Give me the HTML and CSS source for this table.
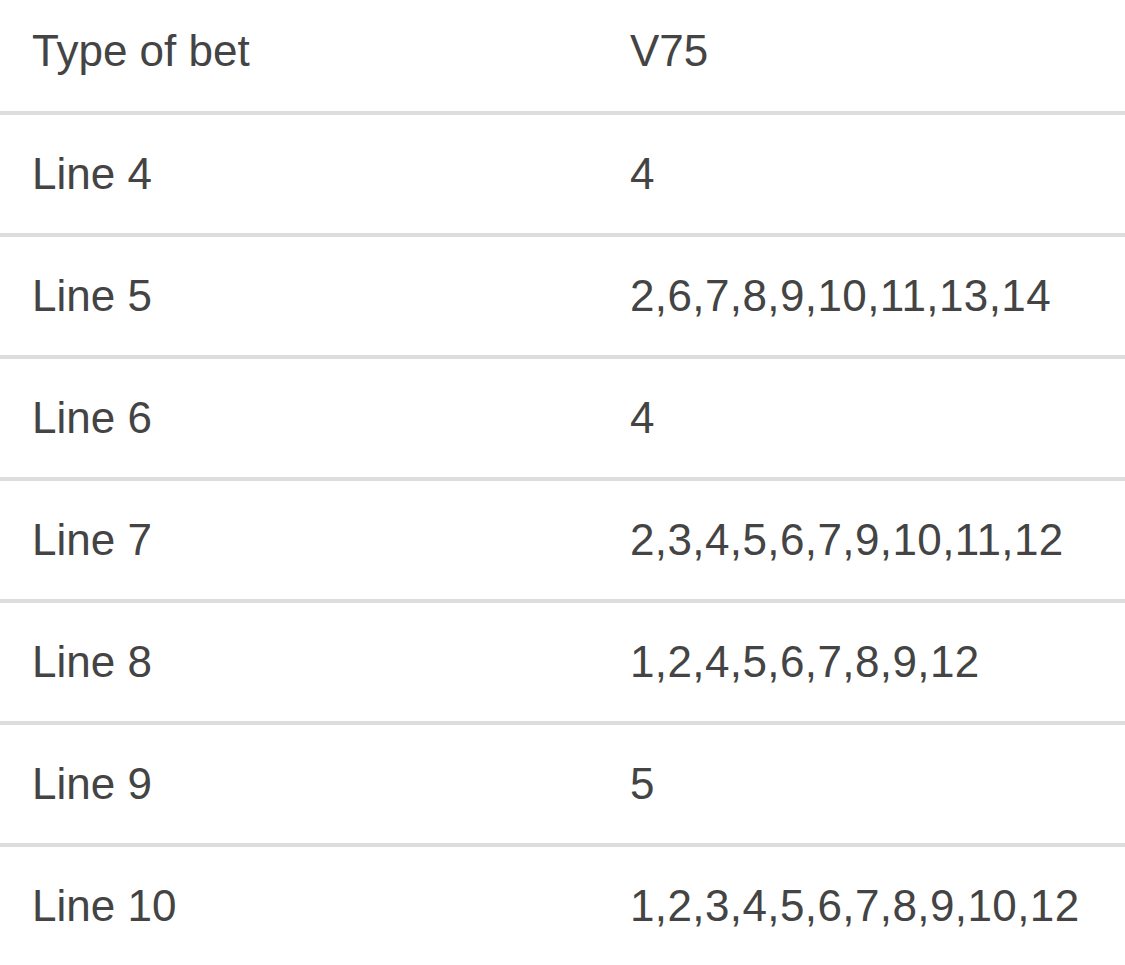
FILE: index.html
```html
<!DOCTYPE html>
<html>
<head>
<meta charset="utf-8">
<link rel="stylesheet" href="styles.css">
</head>
<body>
<div class="table">
  <div class="row head"><div class="cell">Type of bet</div><div class="cell">V75</div></div>
  <div class="row"><div class="cell">Line 4</div><div class="cell value">4</div></div>
  <div class="row"><div class="cell">Line 5</div><div class="cell value">2,6,7,8,9,10,11,13,14</div></div>
  <div class="row"><div class="cell">Line 6</div><div class="cell value">4</div></div>
  <div class="row"><div class="cell">Line 7</div><div class="cell value">2,3,4,5,6,7,9,10,11,12</div></div>
  <div class="row"><div class="cell">Line 8</div><div class="cell value">1,2,4,5,6,7,8,9,12</div></div>
  <div class="row"><div class="cell">Line 9</div><div class="cell value">5</div></div>
  <div class="row"><div class="cell">Line 10</div><div class="cell value">1,2,3,4,5,6,7,8,9,10,12</div></div>
</div>
</body>
</html>
```
FILE: styles.css
```css
html, body {
  margin: 0;
  padding: 0;
  background: #fff;
}
body {
  font-family: "Liberation Sans", Arial, Helvetica, sans-serif;
  font-size: 44px;
  color: #444;
  overflow: hidden;
}
.table {
  display: flex;
  flex-direction: column;
}
.row {
  display: grid;
  grid-template-columns: 598px 1fr;
  align-items: center;
  height: 122px;
  box-sizing: border-box;
  border-top: 4px solid #dddddd;
}
.row.head {
  border-top: none;
  height: 111px;
  padding-bottom: 9px;
}
.cell {
  padding-left: 32px;
  white-space: nowrap;
}
.value {
  letter-spacing: 0.4px;
}
```
